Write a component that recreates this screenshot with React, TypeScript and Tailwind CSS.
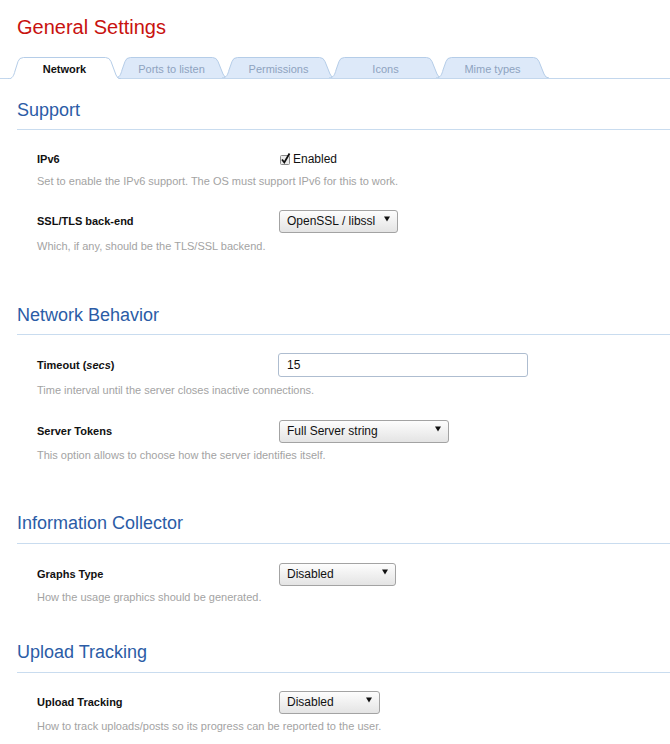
import type { ReactNode } from "react";

const TABS = ["Network", "Ports to listen", "Permissions", "Icons", "Mime types"];

function TabShape({ active }: { active: boolean }) {
  const W = 113;
  const H = active ? 22 : 21;
  const d = `M0 ${H} C4.5 ${H} 6 ${H - 4} 7 ${H - 8} L10 4.5 Q11.2 0.5 15.5 0.5 L${W - 15.5} 0.5 Q${W - 11.5} 0.5 ${W - 10} 4.5 L${W - 5} ${H - 4} Q${W - 3.5} ${H} ${W} ${H}`;
  return (
    <svg width={W} height={H} className="absolute inset-0" aria-hidden>
      <path d={d} fill={active ? "#ffffff" : "#dde9f9"} stroke="#b5cde8" strokeWidth="1" />
    </svg>
  );
}

function Tab({ label, active, first }: { label: string; active?: boolean; first?: boolean }) {
  return (
    <div
      className={`relative flex w-[113px] items-center justify-center pt-[3px] text-[11px] ${
        active ? "z-10 -mb-px h-[22px] font-bold text-[#111]" : "h-[21px] text-[#8ea3c0]"
      } ${first ? "" : "-ml-[6px]"}`}
    >
      <TabShape active={!!active} />
      <span className="relative">{label}</span>
    </div>
  );
}

function Select({ value, width }: { value: string; width: string }) {
  return (
    <div
      className={`flex h-[23px] ${width} items-center justify-between rounded-[3px] border border-[#a3a3a3] bg-gradient-to-b from-[#fdfdfd] to-[#e4e4e4] pl-[7px] pr-[7px] text-[12px] text-[#111]`}
    >
      <span>{value}</span>
      <svg width="6" height="6" viewBox="0 0 6 6" className="mb-[5px]" aria-hidden>
        <path d="M0 0.5 H6 L3 5.5 Z" fill="#111" />
      </svg>
    </div>
  );
}

function Checkbox() {
  return (
    <svg width="13" height="14" viewBox="0 0 13 14" aria-hidden>
      <rect x="1.5" y="3.5" width="9" height="9" rx="1" fill="#ececec" stroke="#8a8a8a" />
      <path d="M3 7.5 L5.3 10.5 L10.5 1.5" fill="none" stroke="#111" strokeWidth="1.8" />
    </svg>
  );
}

function Row({
  label,
  desc,
  control,
  top,
  gap,
}: {
  label: ReactNode;
  desc: string;
  control: ReactNode;
  top: string;
  gap: string;
}) {
  return (
    <div className={`pl-[20px] ${top}`}>
      <div className="flex h-[24px] items-center">
        <div className="w-[242px] text-[11px] font-bold text-[#111]">{label}</div>
        {control}
      </div>
      <p className={`${gap} text-[11px] leading-[14px] text-[#a3a3a3]`}>{desc}</p>
    </div>
  );
}

function Section({
  title,
  children,
  className,
  pad = "pb-[8px]",
}: {
  title: string;
  children: ReactNode;
  className: string;
  pad?: string;
}) {
  return (
    <section className={`pl-[17px] ${className}`}>
      <h2 className={`border-b border-[#c9dcef] ${pad} text-[18px] leading-[22px] text-[#2b5ca6]`}>{title}</h2>
      {children}
    </section>
  );
}

export default function App() {
  return (
    <div className="h-[744px] w-[670px] overflow-hidden bg-white font-['Liberation_Sans',Arial,sans-serif]">
      <h1 className="pl-[17px] pt-[15px] text-[20px] leading-[24px] text-[#c8120f]">General Settings</h1>

      <div className="mt-[18px] flex items-end border-b border-[#c3d7ed] pl-[8px]">
        {TABS.map((t, i) => (
          <Tab key={t} label={t} active={i === 0} first={i === 0} />
        ))}
      </div>

      <Section title="Support" className="mt-[20px]">
        <Row
          top="mt-[17px]"
          gap="mt-[3px]"
          label="IPv6"
          desc="Set to enable the IPv6 support. The OS must support IPv6 for this to work."
          control={
            <label className="flex items-center gap-[1px] text-[12px] text-[#111]">
              <Checkbox />
              <span>Enabled</span>
            </label>
          }
        />
        <Row
          top="mt-[21px]"
          gap="mt-[6px]"
          label="SSL/TLS back-end"
          desc="Which, if any, should be the TLS/SSL backend."
          control={<Select value="OpenSSL / libssl" width="w-[119px]" />}
        />
      </Section>

      <Section title="Network Behavior" className="mt-[51px]">
        <Row
          top="mt-[18px]"
          gap="mt-[6px]"
          label={
            <>
              Timeout (<i>secs</i>)
            </>
          }
          desc="Time interval until the server closes inactive connections."
          control={
            <div className="-ml-px flex h-[24px] w-[250px] items-center rounded-[3px] border border-[#aebdd0] bg-white pl-[8px] text-[12px] text-[#111]">
              15
            </div>
          }
        />
        <Row
          top="mt-[22px]"
          gap="mt-[5px]"
          label="Server Tokens"
          desc="This option allows to choose how the server identifies itself."
          control={<Select value="Full Server string" width="w-[170px]" />}
        />
      </Section>

      <Section title="Information Collector" className="mt-[50px]" pad="pb-[9px]">
        <Row
          top="mt-[18px]"
          gap="mt-[4px]"
          label="Graphs Type"
          desc="How the usage graphics should be generated."
          control={<Select value="Disabled" width="w-[117px]" />}
        />
      </Section>

      <Section title="Upload Tracking" className="mt-[37px]" pad="pb-[9px]">
        <Row
          top="mt-[17px]"
          gap="mt-[5px]"
          label="Upload Tracking"
          desc="How to track uploads/posts so its progress can be reported to the user."
          control={<Select value="Disabled" width="w-[101px]" />}
        />
      </Section>
    </div>
  );
}
